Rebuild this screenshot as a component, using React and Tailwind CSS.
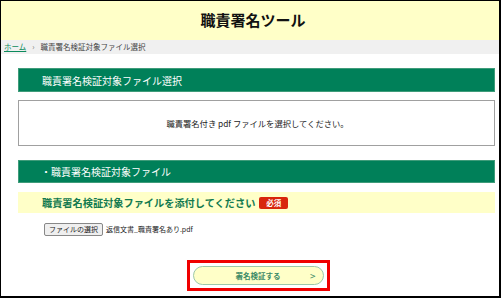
const jp = { fontFamily: '"Noto Sans CJK JP", "Noto Sans", sans-serif' }

export default function App() {
  return (
    <div
      className="w-[501px] h-[298px] bg-white border-black border-l border-t border-r-2 border-b-2 flex flex-col overflow-hidden"
      style={jp}
    >
      {/* Header */}
      <header className="h-[39px] bg-[#ffffc8] flex items-center justify-center pl-[6px]">
        <h1 className="text-[15px] font-bold text-[#111]">職責署名ツール</h1>
      </header>

      {/* Breadcrumb */}
      <nav className="h-[14px] bg-[#f0f0f0] flex items-center px-[3px] text-[7.5px] text-[#444] leading-none">
        <a className="text-[#0b8a5c] underline">ホーム</a>
        <span className="mx-[6px] text-[#777]">›</span>
        <span>職責署名検証対象ファイル選択</span>
      </nav>

      <main className="pl-[17px] pr-[4px] pt-[14px] flex flex-col">
        <div className="h-[24px] bg-[#008059] border border-[#3f9c7a] flex items-center pl-[23px] text-white text-[10px]">
          職責署名検証対象ファイル選択
        </div>

        <div className="mt-[8px] h-[46px] border border-[#a0a0a0] flex items-center justify-center pl-[2px] text-[8.3px] text-[#222]">
          職責署名付き pdf ファイルを選択してください。
        </div>

        <div className="mt-[14px] h-[23px] bg-[#008059] border border-[#3f9c7a] flex items-center pl-[22px] text-white text-[10px]">
          ・職責署名検証対象ファイル
        </div>

        <div className="mt-[9px] h-[21px] bg-[#ffffc8] flex items-center pl-[24px] gap-[4px]">
          <span className="text-[10.2px] font-bold text-[#127a4f]">職責署名検証対象ファイルを添付してください</span>
          <span className="h-[12px] px-[7px] rounded-[2px] bg-[#d8260c] text-white text-[7.5px] font-bold flex items-center">
            必須
          </span>
        </div>

        <div className="mt-[10px] flex items-center pl-[26px] gap-[3px]">
          <button className="h-[13px] px-[4px] border border-[#888] rounded-[2px] bg-[#efefef] text-[7px] text-[#222] flex items-center leading-none">
            ファイルの選択
          </button>
          <span className="text-[7px] text-[#222]">返信文書_職責署名あり.pdf</span>
        </div>

        <div className="mt-[24px] flex justify-center pl-[3px]">
          <div className="border-[3px] border-[#f00000] w-[143px] h-[31px] flex items-center justify-center">
            <button className="relative w-[131px] h-[19px] rounded-full bg-[#ffffc8] border border-[#9dc8a8] flex items-center justify-center text-[7.5px] font-bold text-[#3c8a66]">
              署名検証する
              <span className="absolute right-[7px] text-[10px] font-normal text-[#3c8a66]">&gt;</span>
            </button>
          </div>
        </div>
      </main>
    </div>
  )
}
